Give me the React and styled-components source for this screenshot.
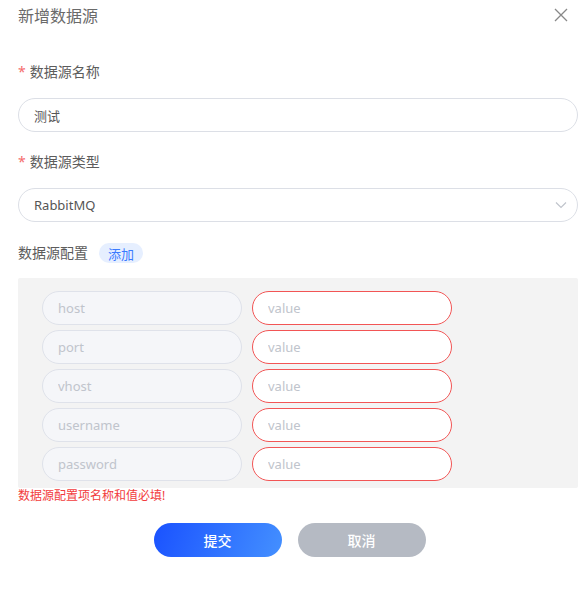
import React, { useState } from 'react'
import styled, { createGlobalStyle } from 'styled-components'

const GlobalStyle = createGlobalStyle`
  html, body {
    margin: 0;
    padding: 0;
    background: #fff;
  }
  body {
    font-family: "Noto Sans", "Noto Sans CJK SC", sans-serif;
  }
  * { box-sizing: border-box; }
`

const fields = ['host', 'port', 'vhost', 'username', 'password']

function App() {
  const [name, setName] = useState('测试')

  return (
    <Dialog>
      <GlobalStyle />
      <Header>
        <Title>新增数据源</Title>
        <Close aria-label="close">
          <svg width="14" height="14" viewBox="0 0 14 14">
            <path d="M1 1L13 13M13 1L1 13" stroke="#888" strokeWidth="1.3" fill="none" />
          </svg>
        </Close>
      </Header>

      <Field>
        <Label required>数据源名称</Label>
        <TextInput value={name} onChange={e => setName(e.target.value)} />
      </Field>

      <Field>
        <Label required>数据源类型</Label>
        <SelectBox>
          <span>RabbitMQ</span>
          <svg width="12" height="8" viewBox="0 0 12 8">
            <path d="M1 1.5L6 6.5L11 1.5" stroke="#c0c4cc" strokeWidth="1.2" fill="none" />
          </svg>
        </SelectBox>
      </Field>

      <ConfigHead>
        <Label>数据源配置</Label>
        <Tag>添加</Tag>
      </ConfigHead>

      <ConfigPanel>
        {fields.map(f => (
          <ConfigRow key={f}>
            <KeyInput placeholder={f} />
            <ValueInput placeholder="value" />
          </ConfigRow>
        ))}
      </ConfigPanel>
      <ErrorText>数据源配置项名称和值必填!</ErrorText>

      <Actions>
        <Button primary>提交</Button>
        <Button>取消</Button>
      </Actions>
    </Dialog>
  )
}

export default App

const Dialog = styled.div`
  width: 581px;
  height: 591px;
  padding: 2px 3px 0 18px;
  background: #fff;
`

const Header = styled.div`
  display: flex;
  align-items: center;
  justify-content: space-between;
  height: 26px;
  margin-bottom: 34px;
`

const Title = styled.div`
  font-size: 16px;
  color: #6a6a6a;
`

const Close = styled.div`
  display: flex;
  margin-right: 10px;
  cursor: pointer;
`

const Field = styled.div`
  display: flex;
  flex-direction: column;
  gap: 16px;
  margin-bottom: 20px;
`

const Label = styled.div`
  font-size: 14px;
  color: #5c5c5c;
  line-height: 20px;
  &::before {
    content: ${p => (p.required ? '"*"' : 'none')};
    color: #f56c6c;
    margin-right: 4px;
  }
`

const pill = `
  height: 34px;
  border-radius: 17px;
  font-family: "Noto Sans", "Noto Sans CJK SC", sans-serif;
  font-size: 13px;
  outline: none;
  padding: 0 15px;
  &::placeholder { color: #c0c4cc; }
`

const TextInput = styled.input`
  ${pill}
  width: 100%;
  border: 1px solid #dcdfe6;
  background: #fff;
  color: #555;
`

const SelectBox = styled.div`
  ${pill}
  display: flex;
  align-items: center;
  justify-content: space-between;
  border: 1px solid #dcdfe6;
  color: #555;
  padding-right: 10px;
`

const ConfigHead = styled.div`
  display: flex;
  align-items: center;
  gap: 11px;
  margin: 21px 0 15px;
`

const Tag = styled.span`
  display: inline-flex;
  align-items: center;
  height: 20px;
  padding: 0 9px;
  border-radius: 10px;
  background: #e6efff;
  color: #3b7bff;
  font-size: 13px;
`

const ConfigPanel = styled.div`
  background: #f3f3f3;
  padding: 13px 24px 7px;
  display: flex;
  flex-direction: column;
  gap: 5px;
  border-radius: 2px;
`

const ConfigRow = styled.div`
  display: flex;
  gap: 10px;
`

const KeyInput = styled.input`
  ${pill}
  width: 200px;
  border: 1px solid #dfe2ea;
  background: #f5f6f9;
`

const ValueInput = styled.input`
  ${pill}
  width: 200px;
  border: 1px solid #f25555;
  background: #fff;
`

const ErrorText = styled.div`
  color: #f23c3c;
  font-size: 12px;
  line-height: 16px;
  margin-top: 0;
`

const Actions = styled.div`
  display: flex;
  justify-content: center;
  gap: 16px;
  margin: 19px 0 0 -17px;
`

const Button = styled.button`
  width: 128px;
  height: 34px;
  border: none;
  border-radius: 17px;
  font-family: "Noto Sans", "Noto Sans CJK SC", sans-serif;
  font-size: 14px;
  font-weight: 500;
  color: #fff;
  cursor: pointer;
  background: ${p => (p.primary ? 'linear-gradient(110deg, #1a52ff, #4490ff)' : '#b5bac3')};
`
